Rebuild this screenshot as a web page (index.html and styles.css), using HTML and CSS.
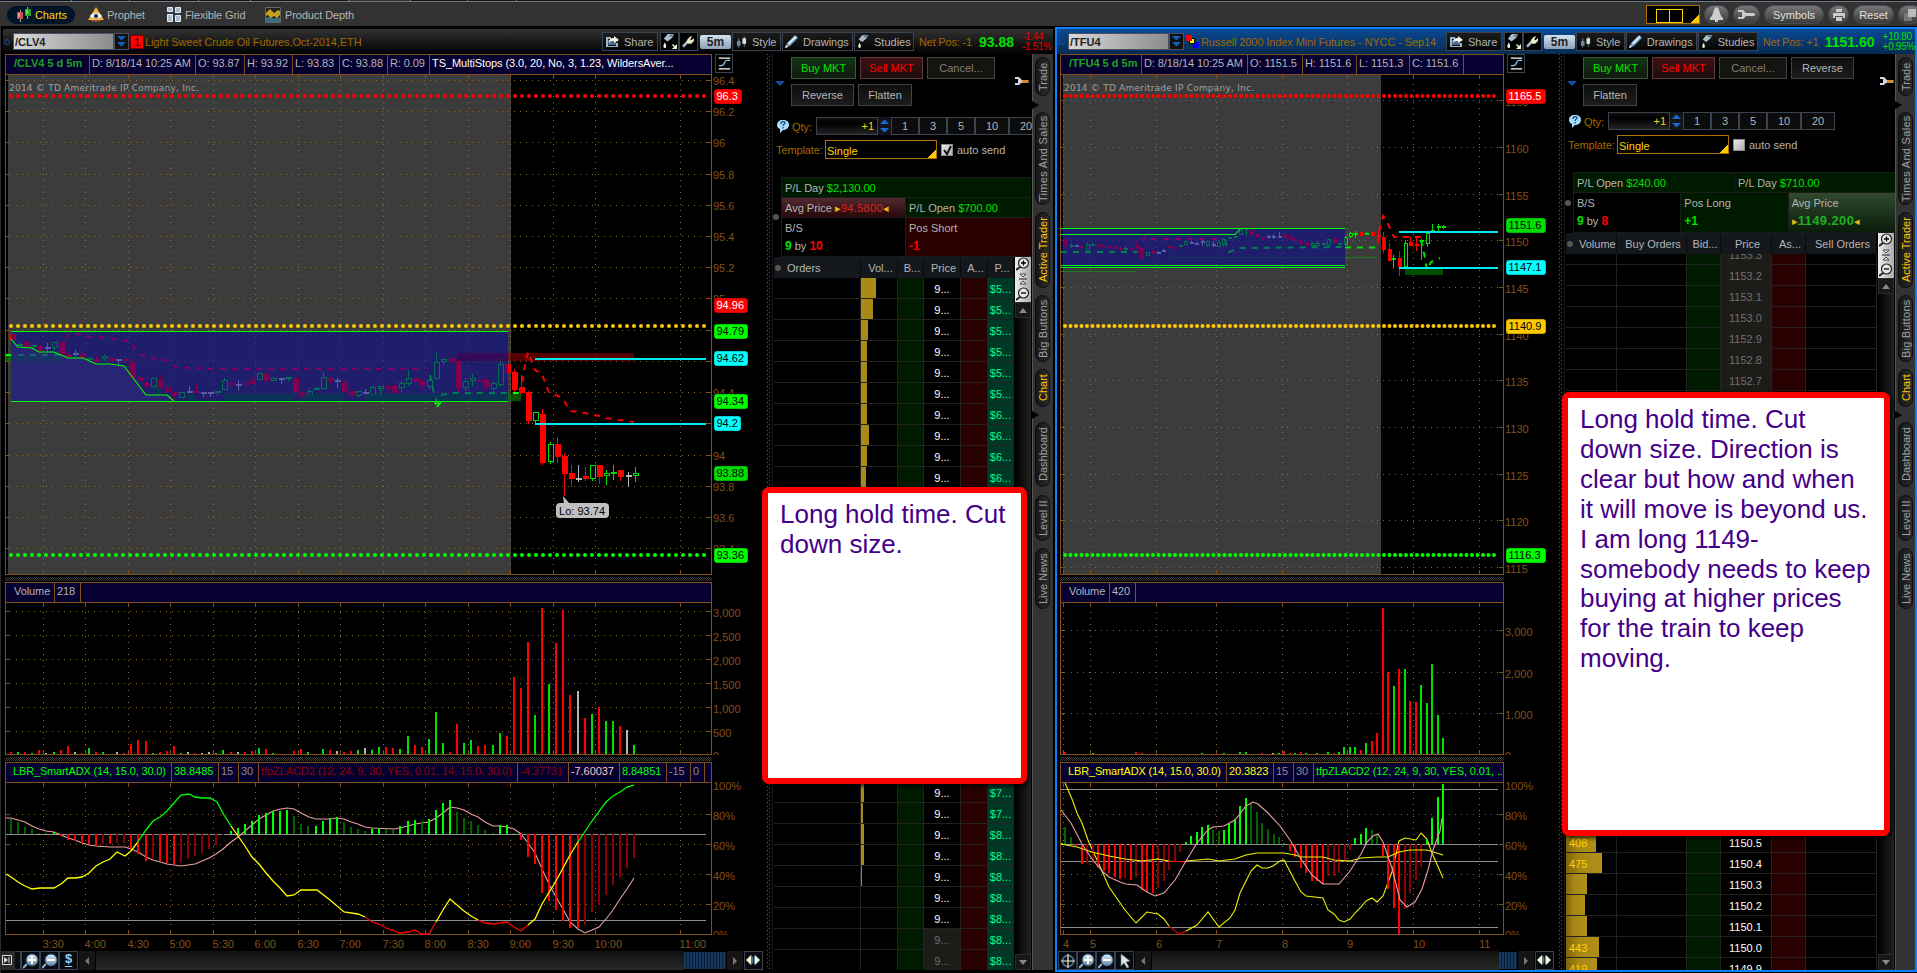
FILE: index.html
```html
<!DOCTYPE html>
<html lang="en">
<head>
    <meta charset="UTF-8">
    <title>Charts</title>
    <link rel="stylesheet" href="styles.css">
</head>
<body>
    <!-- shared icons -->
    <svg class="defs">
        <defs>
            <linearGradient id="ice" x1="0" y1="0" x2="0" y2="1"><stop offset="0" stop-color="#d8ecff"/><stop offset="1" stop-color="#5f86ad"/></linearGradient>
            <symbol id="i-share" viewBox="0 0 14 13">
                <path d="M1 2h5v2H3v7h8V8h2v4H1z" fill="#9db4c8"/><path d="M3 5h8v5H3z" fill="#4a6a88"/>
                <path d="M4 8c0-4 2-5 5-5V1l5 4-5 3V6C7 6 5 6 4 8z" fill="#f4f4e8"/>
            </symbol>
            <symbol id="i-flask" viewBox="0 0 14 16">
                <path d="M6 0h7l-2 4-5 4-4-3z" fill="#a9bdd0"/><path d="M7 2l5-2-1 3z" fill="#4f6d8c"/>
                <path d="M3 9c2 3 2 6 0 6s-2-3 0-6z" fill="#e9f5d8"/>
            </symbol>
            <symbol id="i-corner" viewBox="0 0 5 5"><path d="M5 0v5H0l2-2L0 1l1-1 2 2z" fill="#e9f5d8"/></symbol>
            <symbol id="i-wrench" viewBox="0 0 14 14">
                <path d="M2 12l6-6" stroke="#8fa0b0" stroke-width="3"/><path d="M3 11l4-4" stroke="#e8e8c8" stroke-width="1"/>
                <path d="M7 4l3-3 2 0-2 3 1 1 3-2v3l-3 3H8L6 7z" fill="#e8eccb"/>
            </symbol>
            <symbol id="i-style" viewBox="0 0 12 12">
                <path d="M3 2v10M9 0v11" stroke="#7b93a8"/><path d="M1 5h4v5H1z" fill="#6b87a2"/><path d="M7 2h4v6H7z" fill="#dbe6cf"/>
            </symbol>
            <symbol id="i-pencil" viewBox="0 0 13 13">
                <path d="M0 13l2-5 8-8 3 3-8 8z" fill="#6d93b8"/><path d="M3 8l7-7 2 1-8 8z" fill="#d9ecfa"/><path d="M0 13l1-3 2 2z" fill="#f2f2dc"/>
            </symbol>
            <symbol id="i-curve" viewBox="0 0 17 17">
                <path d="M2 2.5h13M2 14.500h13" stroke="#fff" stroke-width="1.400"/>
                <path d="M2 11h3c4 0 3-6 6-6h4" fill="none" stroke="#8cc2f0" stroke-width="1.500"/>
            </symbol>
            <symbol id="i-help" viewBox="0 0 12 13">
                <path d="M6 0c4 0 6 2 6 5s-3 5-6 5l-3 3V9C1 8 0 7 0 5c0-3 2-5 6-5z" fill="#a9dcf8"/>
                <path d="M4 4c0-3 4-3 4-1 0 1-2 1-2 3M6 7v1.500" fill="none" stroke="#0a4a88" stroke-width="1.300"/>
            </symbol>
            <symbol id="i-tool" viewBox="0 0 16 8">
                <path d="M7 3h7q2 1 0 3H7z" fill="#d08a3a"/><path d="M1 0l4 0 3 3v2L5 8 1 8V6h3V2H1z" fill="#cfd6e8"/>
            </symbol>
            <symbol id="i-plus" viewBox="0 0 16 16">
                <path d="M4 11l-4 4" stroke="#8fb2d0" stroke-width="2"/><circle cx="9" cy="7" r="6" fill="url(#ice)" stroke="#35526e"/>
                <path d="M9 3v8M5 7h8" stroke="#fffbe0" stroke-width="2"/>
            </symbol>
            <symbol id="i-minus" viewBox="0 0 16 16">
                <path d="M4 11l-4 4" stroke="#8fb2d0" stroke-width="2"/><circle cx="9" cy="7" r="6" fill="url(#ice)" stroke="#35526e"/>
                <path d="M5 7h8" stroke="#fffbe0" stroke-width="2"/>
            </symbol>
            <symbol id="i-cross" viewBox="0 0 16 16">
                <circle cx="8" cy="8" r="5.500" fill="none" stroke="#52697c" stroke-width="2"/><path d="M8 1v14M1 8h14" stroke="#f2f2dc" stroke-width="1.200"/>
            </symbol>
            <symbol id="i-pointer" viewBox="0 0 16 16"><path d="M4 1l9 7-4 1 3 5-2 1-3-5-3 3z" fill="#d9e4e4" stroke="#6c8088" stroke-width=".6"/></symbol>
            <symbol id="i-expand" viewBox="0 0 16 16">
                <path d="M0 8l6-6v12zM16 8l-6-6v12z" fill="#f2f7dc"/><path d="M7 4v8M9.500 4v8" stroke="#7fa6c4" stroke-width="1.200"/>
            </symbol>
            <symbol id="i-zin" viewBox="0 0 14 14">
                <circle cx="7.500" cy="6" r="5" fill="#e6e6e6" stroke="#222" stroke-width="1.200"/><path d="M4 10l-4 3" stroke="#222" stroke-width="2"/><path d="M7.500 3.500v5M5 6h5" stroke="#000" stroke-width="1.300"/>
            </symbol>
            <symbol id="i-zfit" viewBox="0 0 14 14"><path d="M3 7h8" stroke="#222"/><path d="M4 2h6L7 5zM4 12h6L7 9z" fill="#eee" stroke="#222" stroke-width=".8"/></symbol>
            <symbol id="i-zout" viewBox="0 0 14 14">
                <circle cx="7.500" cy="6" r="5" fill="#e6e6e6" stroke="#222" stroke-width="1.200"/><path d="M4 10l-4 3" stroke="#222" stroke-width="2"/><path d="M5 6h5" stroke="#000" stroke-width="1.300"/>
            </symbol>
        </defs>
    </svg>

    <div class="window-tabs">
        <i class="wt-1"></i><i class="wt-2"></i><i class="wt-3"></i><i class="wt-4"></i><i class="wt-5"></i><i class="wt-gap"></i><i class="wt-6"></i><i class="wt-7"></i>
    </div>

    <div class="toolbar">
        <div class="nav nav-charts active">
            <svg width="14" height="15" viewBox="0 0 14 15"><path d="M3.500 3v12M10.500 0v12" stroke="#aaa"/><path d="M0 5h6v7H0z" fill="#c8504a"/><path d="M8 2h6v7H8z" fill="#2ea02a"/><path d="M1 6h2v4H1z" fill="#f09a90"/><path d="M9 3h2v4H9z" fill="#70e060"/></svg>
            Charts
        </div>
        <div class="nav nav-prophet">
            <svg width="16" height="15" viewBox="0 0 16 15"><path d="M8 0l8 13H0z" fill="#f0b048"/><path d="M3 13l2 2 1-2 2 2 2-2 1 2 2-2z" fill="#c05a20"/><path d="M2 9c3-4 9-4 12 0-3 3-9 3-12 0z" fill="#fff"/><circle cx="8" cy="9" r="2.300" fill="#2a5a9a"/><circle cx="8" cy="9" r="1" fill="#000"/></svg>
            Prophet
        </div>
        <div class="nav nav-grid">
            <svg width="14" height="15" viewBox="0 0 14 15"><path d="M0 0h14v15H0z" fill="#333c46"/><g fill="#a8bcd0" stroke="#e4ecf4"><path d="M.5.5h5v4h-5zM8.500.5h5v5h-5zM.5 7.500h5v7h-5zM8.500 8.500h5v6h-5z"/></g></svg>
            Flexible Grid
        </div>
        <div class="nav nav-depth">
            <svg width="16" height="16" viewBox="0 0 16 16"><path d="M.5.5h15v15H.5z" fill="#222" stroke="#666"/><path d="M1 11l4-2 4 3 3-2 3 1v4H1z" fill="#3a7080"/><path d="M1 6l4-4 4 4 4-3 2 1v4l-3 3-3-2-3 2-3-3-2 1z" fill="#c8a018"/></svg>
            Product Depth
        </div>
        <div class="toolbar-right">
            <div class="layout-pick"><span></span><span></span></div>
            <div class="pill p-bell"><svg width="15" height="15" viewBox="0 0 15 15"><path d="M7.500 0C11 1 10 8 14 11v2H1v-2C5 8 4 1 7.500 0zM6 13h3v2H6z" fill="#ccc"/></svg></div>
            <div class="pill p-wrench"><svg width="17" height="9" viewBox="0 0 17 9"><path d="M0 0l5 0 3 3h8q2 1.500 0 3H8L5 9 0 9V7h4V2H0z" fill="#ccc"/></svg></div>
            <div class="pill p-symbols">Symbols</div>
            <div class="pill p-print"><svg width="12" height="12" viewBox="0 0 12 12"><path d="M3 0h6v3H3zM0 4h12v5h-2V7H2v2H0zM3 8h6v4H3z" fill="#ccc"/></svg></div>
            <div class="pill p-reset">Reset</div>
            <div class="pill p-win"><svg width="12" height="12" viewBox="0 0 12 12"><path d="M0 4h8v8H0z" fill="#777"/><path d="M4 0h8v8H4z" fill="#bbb"/></svg></div>
        </div>
    </div>

    <div class="workspace">
        <!-- crude oil -->
        <div class="panel panel-left">
            <div class="panel-head">
                <div class="symbol-area">
                    <i class="ring"></i>
                    <div class="symbol-input">/CLV4</div>
                    <div class="symbol-drop"><svg width="9" height="11" viewBox="0 0 9 11"><path d="M0 0h9L4.500 4.500zM0 6h9L4.500 10.500z" fill="#1260b8"/></svg></div>
                    <div class="link-box">1</div>
                    <div class="symbol-name">Light Sweet Crude Oil Futures,Oct-2014,ETH</div>
                </div>
                <div class="hbtn b-share"><svg width="14" height="13"><use href="#i-share"/></svg>Share</div>
                <div class="hbtn b-icon"><svg width="13" height="15"><use href="#i-flask"/></svg><svg class="corner" width="5" height="5"><use href="#i-corner"/></svg></div>
                <div class="hbtn b-icon"><svg width="13" height="14"><use href="#i-wrench"/></svg></div>
                <div class="b-time">5m</div>
                <div class="hbtn b-style"><svg width="11" height="12"><use href="#i-style"/></svg>Style</div>
                <div class="hbtn b-draw"><svg width="13" height="13"><use href="#i-pencil"/></svg>Drawings</div>
                <div class="hbtn b-study"><svg width="12" height="14"><use href="#i-flask"/></svg>Studies</div>
                <div class="net-pos">Net Pos: -1</div>
                <div class="last">93.88</div>
                <div class="change down">-1.44<br>-1.51%</div>
            </div>
            <div class="panel-body">
                <div class="chart-col">
                    <div class="row-with-icon">
                        <div class="study-bar price-bar">
                            <span class="sym">/CLV4 5 d 5m</span><span class="c-date">D: 8/18/14 10:25 AM</span><span class="c-49">O: 93.87</span><span class="c-48">H: 93.92</span><span class="c-47">L: 93.83</span><span class="c-48">C: 93.88</span><span class="c-42">R: 0.09</span><span class="white rest">TS_MultiStops (3.0, 20, No, 3, 1.23, WildersAver...</span>
                        </div>
                        <div class="curve-btn"><svg width="15" height="15"><use href="#i-curve"/></svg></div>
                    </div>
                    <svg class="plot" id="price-l" width="763" height="501" viewBox="3 74 763 501"></svg>
                    <div class="hsplit"></div>
                    <div class="study-bar"><span class="c-vol">Volume</span><span class="c-26">218</span><span class="rest"></span></div>
                    <svg class="plot" id="vol-l" width="763" height="153" viewBox="3 602 763 153"></svg>
                    <div class="hsplit"></div>
                    <div class="study-bar">
                        <span class="c-adx green">LBR_SmartADX (14, 15.0, 30.0)</span><span class="c-47 green">38.8485</span><span class="c-20 grey">15</span><span class="c-20 grey">30</span><span class="c-acd maroon">tfpZLACD2 (12, 24, 9, 30, YES, 0.01, 14, 15.0, 30.0)</span><span class="c-51 maroon">-4.37731</span><span class="c-51 pink">-7.60037</span><span class="c-47 green">8.84851</span><span class="c-24 grey">-15</span><span class="c-14 grey">0</span><span class="rest"></span>
                    </div>
                    <svg class="plot" id="adx-l" width="763" height="153" viewBox="3 782 763 153"></svg>
                    <svg class="plot" id="time-l" width="763" height="16" viewBox="3 935 763 16"></svg>
                    <div class="chart-foot">
                        <div class="play-box"><svg width="10" height="10" viewBox="0 0 10 10"><path d="M.5.5h9v9h-9z" fill="#222" stroke="#ddd"/><path d="M2 2l4 3-4 3z" fill="#ddd"/><path d="M7 2v6" stroke="#ddd"/></svg></div>
                        <div class="fbtn narrow"></div>
                        <div class="fbtn"><svg width="16" height="16"><use href="#i-plus"/></svg></div>
                        <div class="fbtn"><svg width="16" height="16"><use href="#i-minus"/></svg></div>
                        <div class="fbtn dollar">$</div>
                        <div class="arrow left"></div>
                        <div class="track"></div>
                        <div class="thumb wide"></div>
                        <div class="arrow right"></div>
                        <div class="fbtn"><svg width="14" height="14"><use href="#i-expand"/></svg></div>
                    </div>
                </div>
                <div class="vsplit"></div>
                <div class="trader">
                    <div class="orders">
                        <i class="fold"></i>
                        <div class="order-btns">
                            <button class="buy">Buy MKT</button><button class="sell">Sell MKT</button><button class="cancel">Cancel...</button>
                            <button class="reverse">Reverse</button><button class="flatten">Flatten</button>
                        </div>
                        <svg class="tool" width="16" height="8"><use href="#i-tool"/></svg>
                    </div>
                    <div class="qty qty-left">
                        <svg width="12" height="13"><use href="#i-help"/></svg><label>Qty:</label>
                        <div class="qty-input">+1</div><div class="spin"><i></i><i></i></div>
                        <b>1</b><b>3</b><b>5</b><b class="w34">10</b><b class="w34">20</b>
                    </div>
                    <div class="template">
                        <label>Template:</label><div class="select">Single</div>
                        <div class="check"><svg width="11" height="11" viewBox="0 0 11 11"><path d="M2 5l3 4 4-8" fill="none" stroke="#111" stroke-width="2"/></svg></div>auto send
                    </div>
                    <div class="info">
                        <i class="dot"></i>
                        <div class="info-grid ig-left">
                            <div class="pl all">P/L Day <em>$2,130.00</em></div>
                            <div class="avg-short">Avg Price <u>▸</u><s>94.5800</s><u>◂</u></div>
                            <div class="pl">P/L Open <em>$700.00</em></div>
                            <div class="tall">B/S<p><strong class="up">9</strong> by <strong class="dn">10</strong></p></div>
                            <div class="tall short">Pos Short<p><strong class="dn">-1</strong></p></div>
                        </div>
                    </div>
                    <div class="ladder-wrap">
                        <div class="ladder ladder-left">
                            <div class="lrow lhead"><span class="o">Orders</span><span>Vol...</span><span>B...</span><span>Price</span><span>A...</span><span>P...</span></div>
                            <div class="lbody" id="rows-l"></div>
                        </div>
                        <div class="vscroll">
                            <div class="zb"><svg width="14" height="14"><use href="#i-zin"/></svg></div><div class="zb"><svg width="14" height="14"><use href="#i-zfit"/></svg></div><div class="zb"><svg width="14" height="14"><use href="#i-zout"/></svg></div>
                            <div class="vbtn up"></div><div class="vtrack"></div><div class="vbtn"></div>
                        </div>
                    </div>
                    <div class="note note-left">Long hold time. Cut down size.</div>
                </div>
                <div class="side-tabs">
                    <div class="t-trade">Trade</div><div class="t-sales">Times And Sales</div><div class="t-active on">Active Trader</div><div class="t-big">Big Buttons</div><div class="t-chart on">Chart</div><div class="t-dash">Dashboard</div><div class="t-level">Level II</div><div class="t-news">Live News</div>
                </div>
            </div>
        </div>

        <!-- russell 2000 -->
        <div class="panel panel-right">
            <div class="panel-head">
                <div class="symbol-area">
                    <i class="ring"></i>
                    <div class="symbol-input">/TFU4</div>
                    <div class="symbol-drop"><svg width="9" height="11" viewBox="0 0 9 11"><path d="M0 0h9L4.500 4.500zM0 6h9L4.500 10.500z" fill="#1260b8"/></svg></div>
                    <div class="link-stack"><svg width="13" height="13" viewBox="0 0 13 13"><path d="M7 7h6v6H7z" fill="#00f"/><path d="M3.500 3.500h5v5h-5z" fill="#ff0" stroke="#000"/><path d="M0 0h6v6H0z" fill="#f00"/></svg></div>
                    <div class="symbol-name">Russell 2000 Index Mini Futures - NYCC - Sep14</div>
                </div>
                <div class="hbtn b-share"><svg width="14" height="13"><use href="#i-share"/></svg>Share</div>
                <div class="hbtn b-icon"><svg width="13" height="15"><use href="#i-flask"/></svg><svg class="corner" width="5" height="5"><use href="#i-corner"/></svg></div>
                <div class="hbtn b-icon"><svg width="13" height="14"><use href="#i-wrench"/></svg></div>
                <div class="b-time">5m</div>
                <div class="hbtn b-style"><svg width="11" height="12"><use href="#i-style"/></svg>Style</div>
                <div class="hbtn b-draw"><svg width="13" height="13"><use href="#i-pencil"/></svg>Drawings</div>
                <div class="hbtn b-study"><svg width="12" height="14"><use href="#i-flask"/></svg>Studies</div>
                <div class="net-pos">Net Pos: +1</div>
                <div class="last">1151.60</div>
                <div class="change up">+10.80<br>+0.95%</div>
            </div>
            <div class="panel-body">
                <div class="chart-col">
                    <div class="row-with-icon">
                        <div class="study-bar price-bar">
                            <span class="sym">/TFU4 5 d 5m</span><span class="c-date">D: 8/18/14 10:25 AM</span><span class="c-55">O: 1151.5</span><span class="c-54">H: 1151.6</span><span class="c-53">L: 1151.3</span><span class="c-54">C: 1151.6</span><span class="rest"></span>
                        </div>
                        <div class="curve-btn"><svg width="15" height="15"><use href="#i-curve"/></svg></div>
                    </div>
                    <svg class="plot" id="price-r" width="501" height="501" viewBox="1057 74 501 501"></svg>
                    <div class="hsplit"></div>
                    <div class="study-bar"><span class="c-vol">Volume</span><span class="c-26">420</span><span class="rest"></span></div>
                    <svg class="plot" id="vol-r" width="501" height="153" viewBox="1057 602 501 153"></svg>
                    <div class="hsplit"></div>
                    <div class="study-bar">
                        <span class="c-adx yellow">LBR_SmartADX (14, 15.0, 30.0)</span><span class="c-47 yellow">20.3823</span><span class="c-20 grey">15</span><span class="c-20 grey">30</span><span class="rest green">tfpZLACD2 (12, 24, 9, 30, YES, 0.01, ...</span>
                    </div>
                    <svg class="plot" id="adx-r" width="501" height="153" viewBox="1057 782 501 153"></svg>
                    <svg class="plot" id="time-r" width="501" height="16" viewBox="1057 935 501 16"></svg>
                    <div class="chart-foot">
                        <div class="fbtn"><svg width="16" height="16"><use href="#i-cross"/></svg></div>
                        <div class="fbtn"><svg width="16" height="16"><use href="#i-plus"/></svg></div>
                        <div class="fbtn"><svg width="16" height="16"><use href="#i-minus"/></svg></div>
                        <div class="fbtn"><svg width="16" height="16"><use href="#i-pointer"/></svg></div>
                        <div class="arrow left"></div>
                        <div class="track"></div>
                        <div class="thumb"></div>
                        <div class="arrow right"></div>
                        <div class="fbtn"><svg width="14" height="14"><use href="#i-expand"/></svg></div>
                    </div>
                </div>
                <div class="vsplit"></div>
                <div class="trader">
                    <div class="orders">
                        <i class="fold"></i>
                        <div class="order-btns">
                            <button class="buy">Buy MKT</button><button class="sell">Sell MKT</button><button class="cancel">Cancel...</button><button class="reverse">Reverse</button>
                            <button class="flatten">Flatten</button>
                        </div>
                        <svg class="tool" width="16" height="8"><use href="#i-tool"/></svg>
                    </div>
                    <div class="qty">
                        <svg width="12" height="13"><use href="#i-help"/></svg><label>Qty:</label>
                        <div class="qty-input">+1</div><div class="spin"><i></i><i></i></div>
                        <b>1</b><b>3</b><b>5</b><b class="w34">10</b><b class="w34">20</b>
                    </div>
                    <div class="template">
                        <label>Template:</label><div class="select">Single</div>
                        <div class="check"></div>auto send
                    </div>
                    <div class="info">
                        <i class="dot"></i>
                        <div class="info-grid ig-right">
                            <div class="pl half">P/L Open <em>$240.00</em></div>
                            <div class="pl half">P/L Day <em>$710.00</em></div>
                            <div class="tall third">B/S<p><strong class="up">9</strong> by <strong class="dn">8</strong></p></div>
                            <div class="tall third pl">Pos Long<p><strong class="up">+1</strong></p></div>
                            <div class="tall third avg-long">Avg Price<p><u>▸</u><strong>1149.200</strong><u>◂</u></p></div>
                        </div>
                    </div>
                    <div class="ladder-wrap">
                        <div class="ladder ladder-right">
                            <div class="lrow lhead"><span class="o">Volume</span><span>Buy Orders</span><span>Bid...</span><span>Price</span><span>As...</span><span>Sell Orders</span></div>
                            <div class="lbody" id="rows-r"></div>
                        </div>
                        <div class="vscroll">
                            <div class="zb"><svg width="14" height="14"><use href="#i-zin"/></svg></div><div class="zb"><svg width="14" height="14"><use href="#i-zfit"/></svg></div><div class="zb"><svg width="14" height="14"><use href="#i-zout"/></svg></div>
                            <div class="vbtn up"></div><div class="vtrack"></div><div class="vbtn"></div>
                        </div>
                    </div>
                    <div class="note note-right">Long hold time. Cut<br>down size. Direction is<br>clear but how and when<br>it will move is beyond us.<br>I am long 1149-<br>somebody needs to keep<br>buying at higher prices<br>for the train to keep<br>moving.</div>
                </div>
                <div class="side-tabs">
                    <div class="t-trade">Trade</div><div class="t-sales">Times And Sales</div><div class="t-active on">Active Trader</div><div class="t-big">Big Buttons</div><div class="t-chart on">Chart</div><div class="t-dash">Dashboard</div><div class="t-level">Level II</div><div class="t-news">Live News</div>
                </div>
            </div>
        </div>
    </div>

    <script src="charts.js"></script>
</body>
</html>
```
FILE: styles.css
```css
* {
    box-sizing: border-box;
}

body {
    margin: 0;
    height: 100vh;
    overflow: hidden;
    background: #000;
    color: #b4b4b4;
    font-family: "Liberation Sans", Arial, sans-serif;
    font-size: 11px;
    display: flex;
    flex-direction: column;
}

svg {
    display: block;
    flex: none;
}

.defs {
    position: absolute;
    width: 0;
    height: 0;
}

/* top of window */
.window-tabs {
    display: flex;
    height: 2px;
    background: #0a1420;
    border-bottom: 1px solid #777;
}

.window-tabs i { border-right: 1px solid #777; }
.wt-1 { width: 72px; }
.wt-2 { width: 58px; }
.wt-3 { width: 69px; }
.wt-4 { width: 52px; }
.wt-5 { width: 98px; }
.wt-gap { width: 62px; background: #323232; }
.wt-6 { width: 57px; }
.wt-7 { width: 49px; }

.toolbar {
    display: flex;
    align-items: center;
    height: 24px;
    padding: 3px 0 2px 7px;
    background: #323232;
}

.nav {
    display: flex;
    align-items: center;
    gap: 4px;
    height: 18px;
    white-space: nowrap;
    letter-spacing: -0.1px;
}

.nav-charts {
    width: 68px;
    padding-left: 10px;
    background: #001428;
    border-radius: 9px;
    color: #ffd200;
}

.nav-prophet { margin-left: 13px; width: 79px; gap: 3px; }
.nav-grid { width: 98px; }
.nav-depth { width: 100px; }

.toolbar-right {
    display: flex;
    align-items: center;
    gap: 4px;
    margin-left: auto;
    margin-right: -5px;
}

.layout-pick {
    display: flex;
    width: 54px;
    height: 19px;
    padding: 3px 0 0 9px;
    border: 1px solid #a87000;
    background: linear-gradient(135deg, transparent 43px, #ffc800 43px) #000;
}

.layout-pick span {
    width: 14px;
    height: 14px;
    border: 1px solid #ffd000;
    margin-right: -1px;
}

.pill {
    display: flex;
    align-items: center;
    justify-content: center;
    height: 19px;
    border: 1px solid #454c54;
    border-radius: 10px;
    background: linear-gradient(#777, #3a3a3a);
    color: #e0e0e0;
}

.p-bell { width: 25px; }
.p-wrench { width: 27px; }
.p-symbols { width: 60px; }
.p-print { width: 21px; }
.p-reset { width: 41px; }
.p-win { width: 24px; }

/* panels */
.workspace {
    flex: 1;
    display: flex;
    padding-top: 1px;
    border-left: 1px solid #2c2c2c;
}

.panel {
    height: 945px;
    border: 2px solid #000;
    display: flex;
    flex-direction: column;
}

.panel-left {
    width: 1054px;
    background: #000;
}

.panel-right {
    width: 862px;
    border-color: #0a80ff;
}

.panel-head {
    display: flex;
    align-items: center;
    height: 25px;
    background: linear-gradient(#333, #000);
    white-space: nowrap;
}

.panel-right .panel-head {
    background: linear-gradient(#0b4a94, #062a50);
}

.symbol-area {
    display: flex;
    align-items: center;
    flex: none;
    width: 599px;
}

.panel-right .symbol-area { width: 389px; }

.ring {
    width: 6px;
    height: 6px;
    margin: 0 3px 0 1px;
    border: 1.5px solid #0b4fa0;
    border-radius: 50%;
}

.panel-right .ring { margin: 0 3px 0 2px; }

.symbol-input {
    width: 101px;
    height: 17px;
    padding: 1px 1px;
    border: 1px solid #4a4f66;
    background: linear-gradient(90deg, #d8d8d8, #8c8c8c);
    color: #222;
    font-size: 11px;
    font-weight: bold;
    line-height: 15px;
}

.symbol-drop {
    width: 15px;
    height: 17px;
    display: flex;
    align-items: center;
    justify-content: center;
    border: 1px solid #4a4f66;
    background: #111;
}

.link-box {
    width: 14px;
    height: 14px;
    margin: 0 1px;
    background: #f00;
    color: #000;
    text-align: center;
    line-height: 13px;
    border: 1px solid #700;
}

.link-stack { margin: 0 2px 0 2px; }
.symbol-name { color: #a06800; letter-spacing: -0.1px; }

.hbtn {
    display: flex;
    align-items: center;
    gap: 5px;
    height: 19px;
    margin-right: 1px;
    padding-left: 2px;
    border: 1px solid #39424e;
    background: linear-gradient(#1c1c1c, #060606);
}

.b-share { width: 56px; margin-right: 2px; }
.b-icon { width: 19px; padding-left: 1px; margin-right: 0; position: relative; background: #000; }
.corner { position: absolute; right: 1px; bottom: 1px; }
.b-style { width: 49px; padding-left: 3px; }
.b-draw { width: 71px; }
.b-study { width: 60px; margin-right: 5px; }

.b-time {
    width: 31px;
    height: 14px;
    margin: 0 1px 0 2px;
    border-radius: 2px;
    background: linear-gradient(#d4e2ee, #8aa2b8);
    color: #222;
    font-size: 12px;
    font-weight: bold;
    text-align: center;
    line-height: 15px;
}

.net-pos { color: #a06800; width: 60px; letter-spacing: -0.2px; }

.last {
    color: #00e000;
    font-size: 14px;
    font-weight: bold;
    width: 43px;
}

.panel-right .net-pos { width: 62px; }
.panel-right .last { width: 58px; }
.change { font-size: 10px; line-height: 10px; letter-spacing: -0.3px; }
.down { color: #e00000; }
.up { color: #00e000; }

.panel-body {
    display: flex;
    height: 916px;
}

/* chart column */
.chart-col {
    flex: none;
    display: flex;
    flex-direction: column;
    width: 763px;
}

.panel-right .chart-col { width: 501px; }

.row-with-icon { display: flex; }

.study-bar {
    display: flex;
    width: 707px;
    height: 20px;
    margin-left: 2px;
    border: 1px solid #80501a;
    border-width: 1px 0 0 1px;
    background: #060030;
    line-height: 17px;
    letter-spacing: -0.08px;
    white-space: nowrap;
}

.panel-right .study-bar { width: 444px; margin-left: 3px; }

.study-bar span {
    flex: none;
    padding-left: 2px;
    border-right: 1px solid #80501a;
    overflow: hidden;
}

.study-bar .rest { flex: 1; }
.study-bar .sym { width: 84px; padding-left: 8px; color: #1ea01e; font-weight: bold; letter-spacing: 0; }
.panel-right .study-bar .sym { width: 81px; }
.c-date { width: 106px; }
.c-55 { width: 55px; }
.c-54 { width: 54px; }
.c-53 { width: 53px; }
.c-51 { width: 51px; }
.c-49 { width: 49px; }
.c-48 { width: 48px; }
.c-47 { width: 47px; }
.c-42 { width: 42px; }
.c-26 { width: 26px; }
.c-24 { width: 24px; }
.c-20 { width: 20px; }
.c-14 { width: 14px; }
.study-bar .c-vol { width: 49px; padding-left: 8px; }
.study-bar .c-adx { width: 166px; padding-left: 7px; letter-spacing: -0.15px; }
.study-bar .c-acd { width: 259px; }
.white { color: #fff; }
.green { color: #00ff00; }
.yellow { color: #ffff00; }
.grey { color: #8c8c8c; }
.maroon { color: #8b0000; }
.pink { color: #ffc0c0; }

.curve-btn {
    width: 18px;
    height: 19px;
    margin-left: 3px;
    padding: 1px;
    border: 1px solid #39424e;
}

.hsplit {
    height: 7px;
    width: 707px;
    margin-left: 2px;
    background: repeating-conic-gradient(#3c3c3c 0 25%, #000 0 50%) 0 2px / 2px 2px repeat-x, repeating-conic-gradient(#3c3c3c 0 25%, #000 0 50%) 0 4px / 2px 2px repeat-x;
}

.panel-right .hsplit { width: 444px; margin-left: 3px; }

.plot text { font-size: 11px; }
.plot .credit { font-family: "DejaVu Sans", sans-serif; font-size: 9px; }

.chart-foot {
    display: flex;
    height: 19px;
    padding-right: 3px;
}

.panel-right .chart-foot { padding-left: 1px; padding-right: 4px; }

.play-box {
    width: 15px;
    margin-left: -3px;
    padding: 4px 2px;
    background: #2a2a2a;
}

.fbtn {
    width: 19px;
    padding: 1px;
    border: 1px solid #39424e;
    background: #080c12;
}

.fbtn.narrow { width: 6px; border-left: 0; }

.dollar {
    color: #9cd0f8;
    font-size: 13px;
    font-weight: bold;
    text-align: center;
    line-height: 12px;
    text-decoration: underline;
    text-underline-offset: 3px;
}

.arrow {
    width: 16px;
    margin: 0 1px;
    background: #151515;
    display: flex;
    align-items: center;
    justify-content: center;
}

.arrow::after { content: ""; border: 4px solid transparent; }
.arrow.left::after { border-right-color: #777; border-left: 0; }
.arrow.right::after { border-left-color: #777; border-right: 0; }

.track {
    flex: 1;
    background: linear-gradient(#111, #282828);
}

.thumb {
    width: 18px;
    margin: 1px 0;
    background: repeating-linear-gradient(90deg, #16385e 0 2px, #0a1e38 2px 3px);
}

.thumb.wide { width: 42px; }

.vsplit {
    flex: none;
    width: 6px;
    background: repeating-linear-gradient(#666 0 1px, transparent 1px 4px) 1px 0 / 1px 4px repeat-y, repeating-linear-gradient(#666 0 1px, transparent 1px 4px) 3px 2px / 1px 4px repeat-y;
}

/* active trader */
.trader {
    position: relative;
    flex: none;
    width: 260px;
    display: flex;
    flex-direction: column;
    border-left: 1px solid #1a1a1a;
}

.panel-right .trader { width: 331px; }

.orders {
    flex: none;
    display: flex;
    height: 63px;
    padding: 3px 0 0 2px;
}

.fold {
    width: 0;
    height: 0;
    margin: 24px 6px 0 0;
    border: 5px solid transparent;
    border-top-color: #1550a0;
    border-bottom: 0;
}

.order-btns {
    flex: 1;
    display: flex;
    flex-wrap: wrap;
    align-content: flex-start;
    gap: 5px 4px;
}

.tool { margin-top: 20px; }
.panel-left .tool { margin-right: 2px; }

button {
    height: 22px;
    padding: 0;
    border: 1px solid #39424e;
    background: linear-gradient(#0e0e0e, #1c1c1c);
    color: #b4b4b4;
    font-family: inherit;
    font-size: 11px;
}

.buy { width: 65px; color: #00e000; border-color: #3c5a3c; background: linear-gradient(#123412, #101a10); }
.sell { width: 63px; color: #f00; border-color: #5a3a3a; background: linear-gradient(#401010, #1c0e0e); }
.cancel { width: 68px; color: #808080; border-color: #444; background: #141410; }
.reverse { width: 63px; }
.flatten { width: 54px; }

.qty {
    flex: none;
    display: flex;
    align-items: center;
    height: 18px;
    margin: -5px 0 5px 4px;
    overflow: hidden;
}

.qty-left { margin-top: 0; }

.qty label { width: 24px; margin: 2px 0 0 3px; color: #a06800; flex: none; }

.qty-input {
    flex: none;
    width: 62px;
    height: 18px;
    padding-right: 3px;
    border: 1px solid #39424e;
    background: linear-gradient(#111, #000 30%, #222);
    color: #ffd200;
    text-align: right;
    line-height: 17px;
}

.spin {
    flex: none;
    width: 13px;
    height: 18px;
    padding: 3px 2px;
    background: #10151c;
    display: flex;
    flex-direction: column;
    justify-content: space-between;
}

.spin i { border: 4px solid transparent; border-top: 0; border-bottom-color: #1a68c8; }
.spin i + i { border-top: 4px solid #1a68c8; border-bottom: 0; }

.qty b {
    flex: none;
    width: 28px;
    height: 18px;
    border: 1px solid #39424e;
    background: #0c0c0c;
    font-weight: normal;
    text-align: center;
    line-height: 17px;
}

.qty .w34 { width: 34px; }

.template {
    flex: none;
    display: flex;
    align-items: center;
    height: 19px;
    margin-left: 3px;
}

.template label { width: 49px; color: #a06800; letter-spacing: -0.1px; }

.select {
    width: 112px;
    height: 19px;
    padding: 2px 1px;
    border: 1px solid #b07000;
    background: linear-gradient(135deg, transparent 84px, #ffc800 84px) #000;
    color: #ffd200;
    line-height: 17px;
}

.check {
    width: 12px;
    height: 12px;
    margin: 0 4px;
    padding: 1px;
    border: 1px solid #888;
    background: linear-gradient(135deg, #e8e8e8, #b0b0b0);
}

.check svg { margin: -1px; }

.info {
    flex: none;
    display: flex;
    margin-top: 18px;
    align-items: center;
}

.dot {
    flex: none;
    width: 6px;
    height: 6px;
    border-radius: 50%;
    background: #555;
}

.info .dot { margin: 0 2px 0 0; }

.info-grid {
    flex: 1;
    display: grid;
    gap: 1px;
    background: #1c1c1c;
    border: 1px solid #1c1c1c;
    border-right: 0;
}

.ig-left { grid-template-columns: 123px 1fr; margin-right: 1px; }
.ig-right { grid-template-columns: repeat(6, 1fr); }
.info-grid > div { padding-left: 3px; background: #000; height: 19px; line-height: 21px; white-space: nowrap; }
.all { grid-column: span 2; }
.half { grid-column: span 3; }
.third { grid-column: span 2; }
.info-grid > .tall { height: 38px; line-height: 20px; }
.ig-right > .tall { height: 39px; }
.info-grid > .pl { background: #001a00; }
.info-grid > .short { background: #280000; }
.info-grid > .avg-short { background: linear-gradient(#502a30, #280808); }
.info-grid > .avg-long { background: linear-gradient(#304a30, #0a1c0a); }
.info p { margin: -2px 0 0; }
.info em { color: #00e000; font-style: normal; }
.info u { color: #e8b818; text-decoration: none; }
.info s { color: #e02020; text-decoration: none; letter-spacing: 0.3px; }
.info strong { font-size: 12px; }
.info .dn { color: #f00; }
.info .avg-long strong { color: #20b020; font-size: 13px; letter-spacing: 0.4px; }

.ladder-wrap {
    flex: 1;
    display: flex;
    min-height: 0;
}

.ladder {
    margin-left: 1px;
    display: flex;
    flex-direction: column;
    min-height: 0;
}

.lrow {
    flex: none;
    display: grid;
    height: 21px;
    line-height: 23px;
    white-space: nowrap;
}

.ladder-left .lrow { grid-template-columns: 87px 37px 26px 37px 27px 26px; }
.ladder-right .lrow { grid-template-columns: 51px 70px 34px 51px 34px 71px; }

.lrow span {
    border-right: 1px solid #222;
    border-bottom: 1px solid #222;
    overflow: hidden;
    text-align: center;
}

.lrow.lhead { line-height: 22px; }
.lhead span { background: #14181c; border-bottom: 0; border-color: #080a0c; padding-left: 3px; }
.lhead .o { text-align: left; padding-left: 13px; background: radial-gradient(circle at 4px 11px, #555 2.5px, transparent 3.5px) #14181c; }
.lbody { overflow: hidden; flex: 1; display: flex; flex-direction: column; }
#rows-r .lrow:first-child { margin-top: -10px; }
#rows-r .price { text-align: left; padding-left: 8px; }

.lbody .bid { background: #001a00; }
.lbody .ask { background: #280000; }
.lbody .pl-cell { background: #003828; color: #00ff80; }
.lbody .price { color: #fff; }
.lbody .dim { background: #1c1c18; color: #707070; border-bottom-color: #1c1c18; }

.lbody .vol { display: flex; }
.lbody .vol i { height: 20px; background: #a88a14; color: #ffd000; font-style: normal; text-align: left; padding-left: 3px; overflow: visible; }
.lbody .vol i:empty { padding: 0; }
#rows-r .vol i { background: linear-gradient(90deg, #806408, #a88814 40%, #b09018); }

.vscroll {
    width: 16px;
    margin-left: 1px;
    display: flex;
    flex-direction: column;
}

.zb { height: 15px; padding: 0 1px; background: linear-gradient(90deg, #eee, #aaa); }
.vbtn { height: 16px; background: #181818; border: 1px solid #2c2c2c; }
.vbtn::after { content: ""; display: block; width: 0; margin: 5px auto; border: 4px solid transparent; border-top: 5px solid #888; border-bottom: 0; }
.vbtn.up::after { border-top: 0; border-bottom: 5px solid #888; }
.vtrack { flex: 1; background: linear-gradient(90deg, #000, #222); }

/* sticky notes over the ladders */
.note {
    position: absolute;
    border: 6px solid #f00;
    border-radius: 7px;
    background: #fff;
    color: #440088;
    font-size: 26px;
    line-height: 29.9px;
    padding: 7px 4px 0 12px;
    box-shadow: 2px 2px 4px rgba(0, 0, 0, 0.8);
}

.note-left {
    left: -11px;
    top: 433px;
    width: 265px;
    height: 297px;
}

.note-right {
    left: -3px;
    top: 338px;
    width: 328px;
    height: 444px;
    white-space: nowrap;
}

/* vertical tabs */
.side-tabs {
    flex: 1;
    display: flex;
    flex-direction: column;
    padding: 3px 0 0 3px;
    background: linear-gradient(90deg, #555 1px, #333 1px);
    position: relative;
}

.side-tabs div {
    flex: none;
    width: 15px;
    border: 1px solid #0c0c0c;
    border-radius: 8px;
    background: linear-gradient(90deg, #2c2c2c, #161616);
    color: #a0a0a0;
    writing-mode: vertical-rl;
    transform: rotate(180deg);
    text-align: center;
    line-height: 14px;
    font-size: 11px;
}

/* group markers between the tabs */
.side-tabs::before,
.side-tabs::after {
    content: "";
    position: absolute;
    left: 0;
    top: 47px;
    border: 4px solid transparent;
    border-left: 7px solid #000;
    border-right: 0;
}

.side-tabs::after { top: 357px; }

.side-tabs .on { color: #ffc800; }
.side-tabs .t-trade { height: 39px; margin-bottom: 16px; }
.side-tabs .t-sales { height: 93px; margin-bottom: 7px; letter-spacing: 0.3px; }
.side-tabs .t-active { height: 76px; margin-bottom: 7px; }
.side-tabs .t-big { height: 67px; margin-bottom: 7px; letter-spacing: 0.2px; }
.side-tabs .t-chart { height: 38px; margin-bottom: 15px; }
.side-tabs .t-dash { height: 65px; margin-bottom: 8px; }
.side-tabs .t-level { height: 46px; margin-bottom: 7px; }
.side-tabs .t-news { height: 61px; }
```
FILE: charts.js
```js
const NS = 'http://www.w3.org/2000/svg';
const COLORS = { r: '#ff0000', g: '#00e000', w: '#b4b4b4', R: '#8b0000', G: '#006400', b: '#00ff00' };
const FRAME = '#80501a';

function add(svg, tag, attrs, text) {
    const el = document.createElementNS(NS, tag);
    for (const k in attrs) el.setAttribute(k, attrs[k]);
    if (text !== undefined) el.textContent = text;
    svg.appendChild(el);
    return el;
}

function line(svg, x1, y1, x2, y2, stroke, extra) {
    return add(svg, 'line', Object.assign({ x1, y1, x2, y2, stroke, 'shape-rendering': 'crispEdges' }, extra));
}

function rect(svg, x, y, width, height, fill) {
    return add(svg, 'rect', { x, y, width, height, fill, 'shape-rendering': 'crispEdges' });
}

function poly(svg, points, stroke, extra) {
    return add(svg, 'polyline', Object.assign({ points, stroke, fill: 'none', 'stroke-width': 1.1 }, extra));
}

// dotted grid, border and ticks
function grid(svg, f, xs, ys) {
    const dots = { 'stroke-dasharray': '1 5' };
    ys.forEach(y => {
        line(svg, f.l + 11, y + .5, f.r - 4, y + .5, '#8c6530', dots);
        line(svg, f.l, y + .5, f.l + 5, y + .5, FRAME);
        line(svg, f.r - 4, y + .5, f.r, y + .5, FRAME);
    });
    xs.forEach(x => {
        line(svg, x + .5, f.t + 10, x + .5, f.b - 6, '#8c7048', dots);
        line(svg, x + .5, f.t, x + .5, f.t + 5, FRAME);
        line(svg, x + .5, f.b - 5, x + .5, f.b, FRAME);
    });
    line(svg, f.l + .5, f.t, f.l + .5, f.b, FRAME);
    line(svg, f.r + .5, f.t, f.r + .5, f.b, FRAME);
    line(svg, f.l, f.t + .5, f.r + 1, f.t + .5, FRAME);
    line(svg, f.l, f.b - .5, f.r + 1, f.b - .5, FRAME);
}

function labels(svg, x, list) {
    list.forEach(([y, t]) => add(svg, 'text', { x, y: y + 4.5, fill: FRAME }, t));
}

function dotted(svg, x1, x2, y, step, color) {
    add(svg, 'line', { x1, x2, y1: y, y2: y, stroke: color, 'stroke-width': 4, 'stroke-linecap': 'round', 'stroke-dasharray': '0 ' + step });
}

function tag(svg, x, y, w, t, fill, color) {
    add(svg, 'rect', { x, y: y - 7, width: w, height: 15, rx: 3, fill, stroke: 'rgba(0,0,0,.35)' });
    add(svg, 'text', { x: x + 2.5, y: y + 4, fill: color || '#000' }, t);
}

// "x high top bottom low color"
function candles(svg, data, width) {
    data.trim().split(/\s*,\s*/).forEach(s => {
        const p = s.split(' ');
        const [x, hi, top, bot, lo] = p.map(Number);
        const c = COLORS[p[5]], h = width / 2;
        if (hi < top) rect(svg, x, hi, 1, top - hi, c);
        if (lo > bot) rect(svg, x, bot, 1, lo - bot, c);
        if (p[5] === 'g' && bot - top > 2) {
            add(svg, 'rect', { x: x - h + 1, y: top + .5, width: width - 1, height: bot - top - 1, fill: 'none', stroke: c, 'shape-rendering': 'crispEdges' });
        } else {
            rect(svg, x - h + .5, top, width, bot - top, c);
        }
    });
}

// "x height color", negative height hangs below the base
function bars(svg, base, data) {
    data.trim().split(/\s*,\s*/).forEach(s => {
        const [x, h, c] = s.split(' ');
        rect(svg, Math.round(x) - 1, h > 0 ? base - h : base, 2, Math.abs(h), COLORS[c]);
    });
}

const $ = id => document.getElementById(id);

/* ---------- /CLV4 ---------- */
const xl = [43, 85, 128, 170, 213, 255, 298, 340, 383, 425, 468, 510, 553, 595, 680];
const yl = [80, 111, 142, 174, 205, 236, 267, 298, 330, 361, 392, 423, 455, 486, 517, 548];
let s = $('price-l');
rect(s, 8, 75, 503, 499, '#3c3c3c');
grid(s, { l: 5, r: 711, t: 74, b: 575 }, xl, yl);
add(s, 'text', { x: 9, y: 91, fill: '#a0a0a0', class: 'credit', textLength: 190 }, '2014 © TD Ameritrade IP Company, Inc.');
labels(s, 713, [[80, '96.4'], [111, '96.2'], [142, '96'], [174, '95.8'], [205, '95.6'], [236, '95.4'], [267, '95.2'], [298, '95'], [392, '94.4'], [455, '94'], [486, '93.8'], [517, '93.6'], [548, '93.4']]);
candles(s, `12 334 334 340 340 r, 19 342 344 346 346 g, 26 342 342 347 348 r, 33 343 345 347 348 g, 40 344 347 351 351 r, 47 343 347 349 351 w,
54 342 342 348 350 g, 61 342 342 355 355 r, 68 352 355 357 357 r, 75 350 353 355 356 w, 82 352 355 358 358 r, 89 357 358 360 360 g, 96 356 359 362 362 r,
104 355 356 359 361 g, 111 356 358 361 361 r, 118 359 359 361 366 w, 125 353 359 361 363 r, 132 362 362 378 378 r, 139 375 377 381 385 r, 146 381 383 387 387 r,
153 378 378 387 390 g, 160 375 380 388 388 r, 167 384 387 392 392 r, 174 392 392 395 399 r, 181 392 392 398 398 g, 189 386 391 393 393 w, 196 383 391 393 393 r,
203 392 392 394 397 w, 210 392 392 394 397 w, 217 391 391 393 396 g, 224 378 380 390 390 g, 231 381 383 385 388 r, 238 380 384 386 391 w, 245 381 383 385 390 r,
252 377 381 384 384 r, 259 372 373 380 380 g, 266 373 373 381 381 r, 273 377 378 381 381 g, 281 378 378 380 384 w, 288 377 377 379 381 g, 295 378 378 392 397 r,
302 392 392 398 398 r, 309 387 391 396 398 g, 316 387 388 390 390 g, 323 372 377 389 389 g, 330 378 378 381 384 r, 337 378 380 382 388 w, 344 380 383 392 392 r,
351 391 391 396 398 r, 358 391 391 396 398 g, 365 389 392 394 398 w, 372 386 387 395 397 g, 380 386 386 389 397 g, 387 384 386 389 389 r, 394 383 386 393 393 r,
401 381 383 388 392 g, 408 370 378 384 386 g, 415 374 378 382 385 r, 422 379 381 385 389 r, 429 378 380 387 390 g, 436 353 362 379 379 g, 443 358 359 362 365 g,
451 358 358 362 362 r, 458 361 361 388 392 r, 465 378 381 388 391 g, 472 374 378 381 386 g, 479 376 380 382 382 r, 486 378 380 387 391 r, 493 381 383 389 395 g,
500 358 364 385 387 g, 507 364 364 373 380 r, 514 369 372 390 398 r, 521 375 387 393 394 r, 528 391 392 421 424 r, 535 412 412 421 423 g, 542 409 414 463 465 r,
550 442 444 462 464 g, 557 437 444 457 463 r, 564 453 456 474 496 r, 571 465 473 479 487 r, 578 465 478 480 482 w, 585 467 476 479 481 r, 592 465 465 479 481 g,
599 465 465 477 484 r, 606 470 473 476 485 g, 613 465 472 474 480 g, 620 470 470 477 481 r, 628 472 475 477 487 w, 635 467 473 476 482 g`, 6);
// support and resistance bands
[[6, 356, 55, 5], [153, 387, 7, 7], [188, 394, 7, 7], [223, 394, 71, 7], [301, 394, 43, 7], [365, 394, 156, 7]].forEach(b => rect(s, ...b, 'rgba(0,120,0,.7)'));
rect(s, 457, 353, 177, 8, 'rgba(130,0,0,.65)');
const dash = { 'stroke-width': 2, 'stroke-dasharray': '6 6' };
poly(s, '62,351 68,335 78,334 90,337 111,338 117,340 130,341 139,354 150,358 166,360 176,367 190,368 210,369 425,369', '#ff0030', dash);
poly(s, '6,355 62,355', '#00ff00', dash);
poly(s, '430,375 434,394 438,404', '#00ff00', dash);
poly(s, '441,395 450,393 522,393', '#00ff00', dash);
poly(s, '521,394 524,370 528,352 535,370 542,374 549,393 556,395 563,399 570,411 585,413 592,415 600,416 605,418 634,422', '#f00000', dash);
add(s, 'polygon', { points: '11,339 18,347 32,348 39,352 54,352 68,358 83,358 96,364 110,364 124,366 146,395 167,395 174,401 11,401', fill: 'rgba(110,110,110,.35)' });
rect(s, 11, 332, 497, 69, 'rgba(0,0,156,.5)');
line(s, 11, 331.5, 508, 331.5, '#00ff00');
line(s, 11, 401.5, 508, 401.5, '#00ff00');
poly(s, '11,339 18,347 32,348 39,352 54,352 68,358 83,358 96,364 110,364 124,366 146,395 167,395 174,401', '#00ff00');
poly(s, '435,402 436,405', '#00ff00', { 'stroke-width': 1.500 });
poly(s, '437,407 441,402', '#00ff00', { 'stroke-width': 1.800 });
dotted(s, 11, 705, 96, 7, '#ff0000');
dotted(s, 11, 705, 326, 7, '#ffc800');
dotted(s, 11, 705, 555, 7, '#00ff00');
rect(s, 535, 358, 171, 2, '#00e8f0');
rect(s, 535, 423, 171, 2, '#00e8f0');
tag(s, 714, 96, 28, '96.3', '#ff0000', '#fff');
tag(s, 714, 305, 34, '94.96', '#ff0000', '#fff');
tag(s, 714, 331, 34, '94.79', '#00ff00');
tag(s, 714, 358, 34, '94.62', '#00ffff');
tag(s, 714, 401, 34, '94.34', '#00ff00');
tag(s, 714, 423, 27, '94.2', '#00ffff');
tag(s, 714, 473, 34, '93.88', '#00e000');
tag(s, 714, 555, 34, '93.36', '#00ff00');
add(s, 'path', { d: 'M563 496L570 504H564Z', fill: '#c0c0c0' });
add(s, 'rect', { x: 556, y: 503, width: 53, height: 15, rx: 4, fill: '#c0c0c0' });
add(s, 'text', { x: 559, y: 515, fill: '#000', textLength: 46 }, 'Lo: 93.74');

s = $('vol-l');
grid(s, { l: 5, r: 711, t: 602, b: 755 }, xl, [611, 635, 659, 683, 707, 731]);
labels(s, 713, [[612, '3,000'], [636, '2,500'], [660, '2,000'], [684, '1,500'], [708, '1,000'], [732, '500'], [755, '0']]);
bars(s, 754, `11 2 r,18 2 g,25 2 r,32 1 g,39 4 r,46 1 w,54 2 g,61 4 r,68 8 r,75 2 w,82 1 r,89 6 g,96 2 r,103 2 g,117 2 w,124 1 r,131 10 r,138 14 r,146 13 r,153 1 g,160 2 r,
167 3 r,174 8 r,181 1 g,188 2 w,195 1 r,202 1 w,209 2 w,216 1 g,223 4 g,231 2 r,238 2 w,245 2 r,252 3 r,259 6 g,266 5 r,273 1 g,294 3 r,301 5 r,308 2 g,323 5 g,330 4 r,
337 3 w,344 2 r,351 3 r,358 4 g,365 6 w,372 4 g,379 7 g,386 7 r,393 6 r,400 5 g,408 18 g,415 9 r,422 7 r,429 15 g,436 42 g,443 11 g,450 2 r,457 30 r,464 11 g,471 14 g,
478 8 r,485 9 r,493 9 g,500 21 g,507 18 r,514 77 r,521 66 r,528 112 r,535 39 g,542 146 r,549 70 g,556 111 r,563 144 r,570 59 r,578 63 w,585 36 r,592 40 g,599 47 r,
606 33 g,613 33 g,620 28 r,627 24 w,634 9 g`);

s = $('adx-l');
grid(s, { l: 5, r: 711, t: 782, b: 935 }, xl, [814, 844, 874, 904]);
labels(s, 713, [[785, '100%'], [815, '80%'], [845, '60%'], [875, '40%'], [905, '20%'], [934, '0%']]);
line(s, 6, 834.5, 706, 834.5, '#909090');
line(s, 6, 920.5, 706, 920.5, '#909090');
poly(s, '6,818 11,818 18,820 25,822 32,826 39,829 46,831 54,832 61,835 68,838 75,840 82,843 89,845 96,846 110,847 125,847 131,849 138,852 146,857 153,860 160,862 167,864 174,865 181,866 188,865 195,864 202,861 209,858 216,854 223,849 231,842 238,837 245,831 252,825 259,819 266,815 273,811 281,809 287,808 294,809 301,813 309,817 316,819 330,819 337,818 344,819 351,822 358,824 365,827 372,828 394,829 400,828 415,824 429,822 436,818 443,813 450,807 457,808 464,810 471,814 478,817 485,822 493,826 500,826 507,827 514,829 521,834 528,843 535,853 542,869 549,884 556,897 563,909 570,922 578,929 585,933 592,930 599,927 606,919 613,910 620,899 627,889 634,878', '#e8a0a0');
bars(s, 834, `11 15 G,18 12 G,25 7 G,32 5 G,39 1 G,46 1 G,54 2 b,61 -2 r,68 -6 r,75 -7 r,82 -9 r,89 -10 r,96 -12 r,103 -10 R,110 -10 r,117 -9 R,124 -9 R,131 -15 r,138 -20 r,
146 -27 r,153 -24 R,160 -27 r,167 -29 r,174 -30 r,181 -29 R,188 -25 R,195 -22 R,202 -19 R,209 -15 R,216 -11 R,223 -1 R,231 3 b,238 6 b,245 10 b,252 13 b,259 19 b,266 21 b,
273 23 b,280 23 b,287 24 b,294 18 G,301 10 G,308 8 G,316 8 b,323 13 b,330 16 b,337 17 b,344 12 G,351 7 G,358 5 G,365 3 G,372 5 b,379 6 b,386 5 G,393 4 G,400 8 b,408 13 b,
415 14 b,422 13 G,429 15 b,436 24 b,443 31 b,450 34 b,457 22 G,464 16 G,471 13 G,478 9 G,485 4 G,493 1 G,500 9 b,507 9 b,514 1 G,521 -6 r,528 -23 r,535 -30 r,542 -59 r,
549 -67 r,556 -76 r,563 -87 r,570 -94 r,578 -94 r,585 -91 R,592 -78 R,599 -71 R,606 -61 R,613 -51 R,620 -43 R,627 -34 R,634 -24 R`);
const thick = { 'stroke-width': 1.300 };
poly(s, '6,874 11,877 18,882 25,886 32,889 40,888 54,888 61,884 68,878 75,878 82,877 89,873 96,866 103,862 110,859 117,852 125,856 131,851 137,843', '#ffff00', thick);
poly(s, '137,843 146,830 153,821 160,817 167,811 174,803 181,795 189,794 195,797 202,798 210,798 217,802 224,815 231,826', '#00ff00', thick);
poly(s, '231,826 238,836 245,846 252,857 259,864 266,873 273,881 280,888 287,896 294,895 301,890 317,890 330,900 344,912 358,914 365,917', '#ffff00', thick);
poly(s, '365,917 372,922 379,924 386,928 400,933 408,932 415,930 422,934 429,934 436,922', '#ff0000', thick);
poly(s, '436,922 443,910 450,899 464,911 471,916 478,920', '#ffff00', thick);
poly(s, '478,920 485,923 493,924 507,922 514,927 521,931 528,925', '#ff0000', thick);
poly(s, '528,925 535,919 542,904 556,881 570,855 578,842', '#ffff00', thick);
poly(s, '578,842 592,821 606,802 613,796 620,792 627,787 634,785', '#00ff00', thick);

s = $('time-l');
['3:30', '4:00', '4:30', '5:00', '5:30', '6:00', '6:30', '7:00', '7:30', '8:00', '8:30', '9:00', '9:30', '10:00', '11:00'].forEach((t, i) => {
    add(s, 'text', { x: xl[i] - .5, y: 948, fill: FRAME }, t);
});

/* ---------- /TFU4 ---------- */
const xr = [1063, 1090, 1156, 1216, 1282, 1347, 1413, 1479];
s = $('price-r');
rect(s, 1063, 75, 318, 499, '#3c3c3c');
grid(s, { l: 1060, r: 1503, t: 74, b: 575 }, xr, [100, 147, 194, 240, 287, 334, 380, 427, 474, 520, 567]);
add(s, 'text', { x: 1064, y: 91, fill: '#a0a0a0', class: 'credit', textLength: 190 }, '2014 © TD Ameritrade IP Company, Inc.');
labels(s, 1505, [[101, '1165'], [148, '1160'], [195, '1155'], [241, '1150'], [288, '1145'], [335, '1140'], [381, '1135'], [428, '1130'], [475, '1125'], [521, '1120'], [568, '1115']]);
rect(s, 1169, 257, 208, 1, '#1c7a1c');
rect(s, 1061, 271, 75, 1, '#1c7a1c');
rect(s, 1405, 268, 38, 7, '#004d00');
candles(s, `1065 239 239 246 249 r,1071 243 245 247 248 g,1076 245 245 247 247 w,1081 246 246 248 248 r,1087 242 244 250 250 g,1092 242 244 246 246 g,1098 243 245 247 247 r,
1103 244 245 247 247 r,1109 246 246 248 248 r,1114 246 246 249 249 r,1120 247 248 250 250 r,1125 246 248 250 250 g,1131 248 248 250 250 r,1136 242 246 248 248 r,
1141 248 248 258 258 r,1147 252 252 256 256 g,1152 250 251 254 254 r,1158 251 252 254 254 w,1163 249 250 252 252 w,1169 246 246 248 248 r,1174 247 247 249 249 r,
1180 245 245 247 247 g,1185 240 241 245 245 g,1191 241 242 244 244 w,1196 242 243 245 245 w,1202 240 241 243 246 w,1207 240 241 246 247 g,1213 241 244 246 247 w,
1218 240 242 247 247 g,1223 238 239 245 247 g,1229 237 237 239 239 g,1235 236 236 238 238 g,1240 229 230 235 235 g,1246 229 229 230 236 g,1251 229 230 235 235 r,
1257 234 234 237 237 r,1262 237 237 239 239 r,1268 235 236 238 238 w,1273 234 236 238 239 w,1279 232 236 238 238 w,1284 234 234 238 238 r,1290 235 237 240 240 r,
1295 239 239 241 243 r,1300 240 241 244 244 r,1306 242 242 245 247 r,1312 242 243 246 246 g,1317 241 243 246 246 g,1323 242 243 245 245 g,1328 239 239 246 246 g,
1334 237 238 243 243 r,1339 242 243 245 245 g,1345 236 237 245 245 g,1350 232 233 237 238 g,1355 231 233 235 238 g,1361 232 232 236 236 r,1366 232 233 235 235 g,
1372 232 232 236 236 r,1378 231 235 237 243 r,1383 232 237 250 253 r,1389 243 249 261 261 r,1393 255 258 260 268 g,1399 251 258 267 276 r,
1405 240 243 267 267 g,1410 237 242 246 246 r,1416 236 244 246 251 r,1421 239 240 242 260 g,1427 231 233 244 247 g,1432 224 230 232 233 g,1438 224 226 228 231 g,
1443 225 226 228 229 g`, 4);
poly(s, '1061,252 1138,252', '#00ff00', dash);
poly(s, '1138,252 1145,236 1150,239 1222,239', '#ff0030', dash);
poly(s, '1225,240 1229,252 1240,248 1344,247', '#00ff00', dash);
rect(s, 1061, 229, 284, 38, 'rgba(0,0,156,.5)');
[228, 265, 267].forEach(y => rect(s, 1061, y, 284, 1, '#00ff00'));
poly(s, '1061,234.5 1235,234.5 1240,229', '#00ff00');
poly(s, '1345,247.5 1377,247.5', '#00e000', dash);
poly(s, '1378,243 1380,228 1383,216 1388,224 1394,237 1421,237', '#ff0000', dash);
poly(s, '1421,240 1425,258 1427,270 1431,262 1440,258', '#00e000', dash);
rect(s, 1399, 231, 99, 2, '#00e8f0');
rect(s, 1399, 267, 99, 2, '#00e8f0');
dotted(s, 1065, 1499, 96, 5.5, '#ff0000');
dotted(s, 1065, 1499, 326, 5.5, '#ffc800');
dotted(s, 1065, 1499, 555, 5.5, '#00ff00');
tag(s, 1506, 96, 40, '1165.5', '#ff0000', '#fff');
tag(s, 1506, 225, 40, '1151.6', '#00e000');
tag(s, 1506, 267, 40, '1147.1', '#00ffff');
tag(s, 1506, 326, 40, '1140.9', '#ffc800');
tag(s, 1506, 555, 40, '1116.3', '#00ff00');

s = $('vol-r');
grid(s, { l: 1060, r: 1503, t: 602, b: 755 }, xr, [630, 672, 713]);
labels(s, 1505, [[631, '3,000'], [673, '2,000'], [714, '1,000'], [755, '0']]);
bars(s, 754, `1065 2 r,1093 1 g,1136 2 r,1142 1 r,1202 1 g,1224 1 g,1240 2 g,1246 2 g,1262 1 r,1273 1 w,1279 1 g,1284 3 r,1290 1 r,1295 1 g,1301 2 r,1306 1 g,1317 1 g,
1328 2 g,1334 1 r,1339 2 g,1344 7 g,1350 7 g,1355 7 g,1361 4 r,1366 11 g,1372 13 r,1377 21 r,1383 146 r,1388 82 r,1394 68 g,1399 85 r,1405 85 g,1410 53 r,1416 52 r,
1421 69 g,1427 51 g,1432 90 g,1438 39 g,1443 16 g`);

s = $('adx-r');
grid(s, { l: 1060, r: 1503, t: 782, b: 935 }, xr, [814, 844, 874, 904]);
labels(s, 1505, [[785, '100%'], [815, '80%'], [845, '60%'], [875, '40%'], [905, '20%'], [934, '0%']]);
[789.5, 844.5, 861.5, 927.5].forEach(y => line(s, 1061, y, 1498, y, '#909090'));
poly(s, '1065,783 1072,799 1077,813 1082,823 1088,840 1092,849 1098,862 1109,887 1125,910 1136,923 1147,912 1158,914 1164,919 1169,926', '#f0f000');
poly(s, '1169,926 1175,931 1180,934 1186,931', '#d00000');
poly(s, '1186,931 1197,925 1208,912 1219,927 1230,918 1235,910 1240,893 1251,871 1257,865 1262,868 1268,868 1273,866 1280,861 1284,860 1295,881 1301,892 1306,896 1323,898 1328,910 1334,914 1339,920 1344,922 1350,919 1355,913 1361,907 1366,901 1372,898 1377,902 1383,896 1392,872 1399,841 1405,838 1416,840 1421,833 1427,839 1432,853 1443,878', '#f0f000');
bars(s, 844, `1062 1 b,1065 17 G,1071 7 G,1076 -2 r,1082 -20 r,1087 -19 R,1093 -19 R,1098 -23 r,1104 -27 r,1109 -29 r,1115 -33 r,1120 -35 r,1125 -34 R,1131 -36 r,1136 -33 R,
1142 -46 r,1147 -48 r,1153 -49 r,1158 -44 R,1164 -37 R,1169 -26 R,1175 -18 R,1180 -8 R,1186 2 b,1191 8 b,1197 12 b,1202 17 b,1208 19 b,1213 14 G,1219 13 G,1224 14 b,
1229 20 b,1235 25 b,1240 38 b,1246 46 b,1251 41 G,1257 32 G,1262 21 G,1268 15 G,1274 10 G,1279 7 G,1284 1 G,1290 -7 r,1295 -13 r,1301 -24 r,1306 -29 r,1312 -37 r,
1317 -37 r,1323 -40 r,1328 -32 R,1334 -32 R,1339 -29 R,1345 -18 R,1350 -6 R,1355 6 b,1361 10 b,1366 16 b,1372 14 G,1377 10 G,1383 -12 r,1388 -45 r,1394 -64 r,1399 -90 r,
1405 -65 R,1410 -49 R,1416 -36 R,1421 -23 R,1427 5 b,1432 26 b,1438 47 b,1443 60 b`);
poly(s, '1061,844 1077,847 1092,852 1109,856 1125,859 1142,861 1158,859 1169,861', '#f0f000');
poly(s, '1169,861 1186,862', '#ff0000');
poly(s, '1186,861 1208,859 1219,861 1235,859 1246,855 1257,853 1284,853 1295,855 1301,857 1323,857 1334,860 1350,861 1361,858 1377,857 1388,857 1399,852 1410,850 1427,850 1443,855', '#f0f000');
poly(s, '1061,810 1071,823 1082,844 1092,859 1103,872 1109,877 1120,882 1126,884 1137,885 1147,892 1155,896 1164,893 1175,880 1186,861 1197,843 1208,830 1213,827 1224,826 1235,820 1246,806 1253,802 1258,804 1268,813 1280,826 1290,840 1301,859 1312,875 1323,884 1339,884 1350,871 1361,854 1367,842 1373,836 1378,834 1383,842 1392,868 1400,900 1407,907 1415,902 1422,889 1428,870 1433,850 1440,831 1442,818', '#e8a0a0');

s = $('time-r');
[[1063, '4'], [1090, '5'], [1156, '6'], [1216, '7'], [1282, '8'], [1347, '9'], [1413, '10'], [1479, '11']].forEach(([x, t]) => {
    add(s, 'text', { x, y: 948, fill: FRAME }, t);
});

/* ---------- ladders ---------- */
const volLeft = [15, 12, 7, 6, 6, 6, 6, 8, 6, 5, 5, 5, 5, 4, 4, 4, 4, 4, 4, 4, 4, 4, 3, 3, 3, 2, 3, 3, 1, 0, 0, 0, 0, 0];
$('rows-l').innerHTML = volLeft.map((v, i) => {
    const pl = i < 6 ? 5 : i < 15 ? 6 : i < 26 ? 7 : 8;
    return `<div class="lrow"><span></span><span class="vol"><i style="width:${v}px"></i></span><span class="bid"></span><span class="price${i > 30 ? ' dim' : ''}">9...</span><span class="ask"></span><span class="pl-cell">$${pl}...</span></div>`;
}).join('');

const volRight = { 28: [30, 408], 29: [36, 475], 30: [21, ''], 31: [19, ''], 32: [21, ''], 33: [33, 443], 34: [31, 419] };
let rows = '';
for (let i = 0; i < 35; i++) {
    const v = volRight[i] || [0, ''];
    rows += `<div class="lrow"><span class="vol"><i style="width:${v[0]}px">${v[1]}</i></span><span></span><span class="bid"></span><span class="price${i < 12 ? ' dim' : ''}">${(1153.3 - i / 10).toFixed(1)}</span><span class="ask"></span><span></span></div>`;
}
$('rows-r').innerHTML = rows;
```
